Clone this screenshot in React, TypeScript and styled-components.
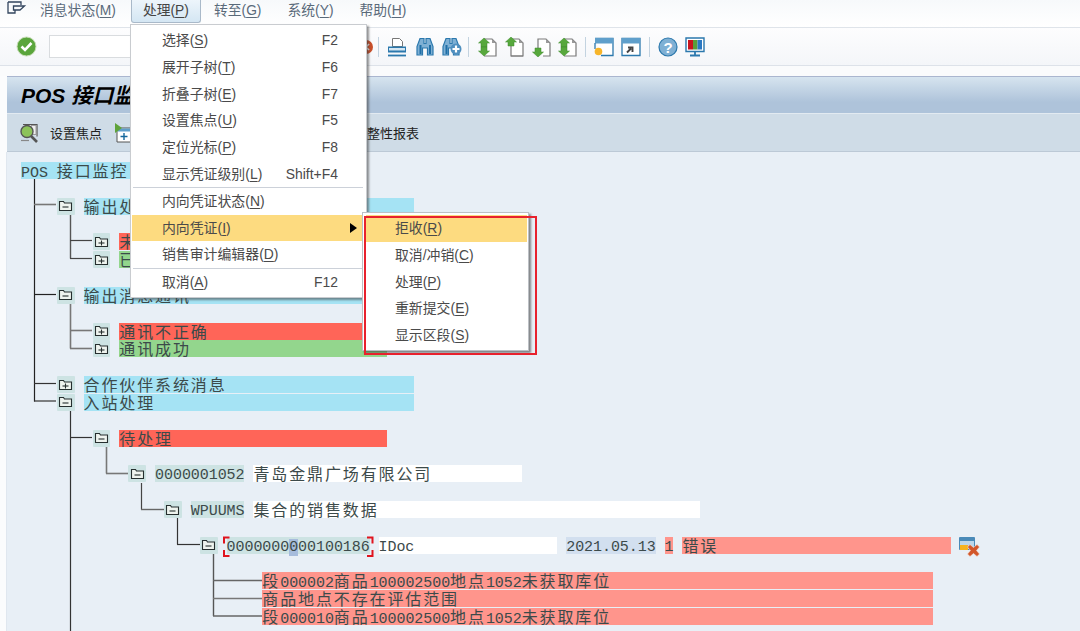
import React from "react";
import styled, { createGlobalStyle } from "styled-components";

const Global = createGlobalStyle`
  html, body { margin: 0; padding: 0; background: #fbfcfd; }
  #root { width: 1080px; height: 631px; overflow: hidden; }
`;

const UI_FONT = `"Liberation Sans", "Noto Sans CJK SC", sans-serif`;

const Root = styled.div`
  position: relative; width: 1080px; height: 631px; overflow: hidden;
  display: flex; flex-direction: column; font-family: ${UI_FONT};
`;
const MenuBar = styled.div`
  height: 28px; flex: none; box-sizing: border-box; display: flex; align-items: flex-start;
  background: linear-gradient(#f7f9fb, #ffffff); border-bottom: 1px solid #dfe4ea; padding-left: 7px;
`;
const MenuSlot = styled.div`position: relative;`;
const MenuLabel = styled.div<{ $active?: boolean }>`
  box-sizing: border-box; height: 23px; line-height: 22px; font-size: 13.8px; color: #5a6a7a;
  padding: 0 13px; margin-left: ${p => (p.$active ? "2px" : "0")};
  ${p => p.$active ? `padding: 0 11px; border: 1px solid #a9b9c9; border-top: 0; border-radius: 0 0 3px 3px; background: linear-gradient(#edf5fb, #d4e6f3); color: #444;` : ""}
  white-space: nowrap;
  u { text-underline-offset: 2px; }
`;
const Toolbar = styled.div`
  height: 38px; flex: none; box-sizing: border-box; display: flex; align-items: center; padding: 0 0 0 16px;
  background: linear-gradient(#fdfdfe, #f4f6f9); border-bottom: 1px solid #dde2e9;
`;
const OkIcon = styled.svg`width: 21px; height: 21px; flex: none;`;
const CommandField = styled.div`
  width: 240px; height: 23px; margin-left: 12px; box-sizing: border-box; background: #fff; border: 1px solid #d9dcdf; flex: none;
`;
const ToolSep = styled.div<{ $l: number; $r: number }>`
  width: 1px; height: 20px; background: #c3d3e0; flex: none; margin: 0 ${p => p.$r}px 0 ${p => p.$l}px;
`;
const ToolIcon = styled.svg<{ $gap?: number; $left?: number }>`
  width: 20px; height: 20px; flex: none; margin-right: ${p => p.$gap ?? 7}px; margin-left: ${p => p.$left ?? 0}px;
`;
const PanelGap = styled.div`height: 10px; flex: none; background: #fafbfc;`;
const Panel = styled.div`
  flex: 1; margin-left: 7px; display: flex; flex-direction: column; min-height: 0; border-top: 1px solid #aab6cf;
`;
const TitleBar = styled.div`
  height: 36px; flex: none; display: flex; align-items: center; padding-left: 14px; padding-bottom: 2px; box-sizing: border-box;
  background: linear-gradient(#d6e4ef, #aec3da 70%);
  font: italic bold 21px "Liberation Sans", "Noto Sans CJK SC", sans-serif; color: #000; white-space: pre;
`;
const AppBar = styled.div`
  height: 39px; flex: none; box-sizing: border-box; display: flex; align-items: center; padding-left: 12px;
  background: #cfdce7; border-top: 1px solid #e2eaf1; border-bottom: 1px solid #bcc9d6;
  font-size: 13px; color: #222;
`;
const AppLabel = styled.span<{ $left: number }>`margin-left: ${p => p.$left}px; white-space: nowrap;`;
const AppIcon = styled.svg<{ $left?: number }>`width: 20px; height: 20px; flex: none; margin-left: ${p => p.$left ?? 0}px;`;
const Tree = styled.div`
  flex: 1; background: #e8eff6; padding: 10px 0 0 14px; display: grid; overflow: hidden;
  grid-template-columns: repeat(116, 8.94px); grid-auto-rows: 17.85px; align-content: start;
  border-left: 1px solid #e0e7ef; margin-left: -1px;
`;
const Cell = styled.div<{ $c: number; $n: number; $r: number; $bg: string }>`
  grid-column: ${p => p.$c + 1} / span ${p => p.$n}; grid-row: ${p => p.$r + 1};
  height: 17px; line-height: 17px; background: ${p => p.$bg}; white-space: nowrap;
  font-size: 15px; color: #3c4a4a; position: relative;
`;
const Latin = styled.span`font-family: "Liberation Mono", monospace; letter-spacing: -0.06px;`;
const Cjk = styled.span`font-family: "Noto Sans CJK SC", sans-serif; font-size: 16px; letter-spacing: 1.88px; font-weight: 400;`;
const Selected = styled.span`background: #a6bcdc;`;
const Folder = styled.div<{ $c: number; $r: number }>`
  grid-column: ${p => p.$c + 1} / span 2; grid-row: ${p => p.$r + 1};
  height: 17px; background: #cde3e3; border-radius: 1px; display: flex; align-items: center; justify-content: center;
`;
const StatusIcon = styled.svg<{ $c: number; $r: number }>`
  grid-column: ${p => p.$c + 1} / span 3; grid-row: ${p => p.$r + 1}; width: 21px; height: 21px;
`;
const Overlay = styled.svg`position: absolute; left: 0; top: 0; width: 1080px; height: 631px; pointer-events: none;`;
const Dropdown = styled.div`
  position: absolute; left: 1px; top: 24px; width: 237px; box-sizing: border-box; z-index: 5; padding: 2px 1px 1px;
  background: #fff; border: 1px solid #c9ccd0; box-shadow: 2px 2px 2px rgba(60,60,60,.55);
`;
const Item = styled.div<{ $on?: boolean; $indent: number }>`
  height: 26.8px; line-height: 27px; padding: 0 27px 0 ${p => p.$indent}px; position: relative;
  display: flex; justify-content: space-between; font-size: 13.9px; color: #4a4a4a; white-space: nowrap;
  background: ${p => (p.$on ? "#fddb80" : "transparent")};
  u { text-underline-offset: 2px; }
`;
const Divider = styled.div<{ $after?: number }>`
  height: 1px; background: #ccd1d9; margin: -0.5px 2px ${p => p.$after ?? -0.5}px 1px;
`;
const Arrow = styled.i`
  position: absolute; left: 218px; top: 8px; width: 0; height: 0;
  border-left: 7px solid #000; border-top: 5px solid transparent; border-bottom: 5px solid transparent;
`;
const Submenu = styled.div`
  position: absolute; left: 231px; top: 187px; width: 167px; box-sizing: border-box; padding: 2px 1px 1.5px 3px; z-index: 6;
  background: #fff; border: 1px solid #bcc0c5; box-shadow: 2px 2px 2px rgba(60,60,60,.6);
`;
const RedFrame = styled.div`
  position: absolute; left: 364px; top: 216px; width: 173px; height: 139px; box-sizing: border-box;
  border: 2.5px solid #e8212d; z-index: 7; pointer-events: none;
`;

const splitRuns = (s: string) => s.match(/[\u3000-\u9fff]+|[^\u3000-\u9fff]+/g) ?? [];
const Txt = ({ s }: { s: string }) => (
  <>
    {splitRuns(s).map((r, i) => (/[\u3000-\u9fff]/.test(r) ? <Cjk key={i}>{r}</Cjk> : <Latin key={i}>{r}</Latin>))}
  </>
);
const Mn = ({ t, k }: { t: string; k: string }) => (
  <span>{t}(<u>{k}</u>)</span>
);

const CY = "#a5e3f4", RD = "#ff6558", GN = "#93d68d", SA = "#ff958c", WH = "#ffffff", TE = "#cde3e3", BL = "#d2dfef";

const cells: [number, number, number, string, string][] = [
  [0, 0, 18, CY, "POS 接口监控"],
  [2, 7, 37, CY, "输出处理"],
  [4, 11, 30, RD, "未"],
  [5, 11, 30, GN, "已"],
  [7, 7, 37, CY, "输出消息通讯"],
  [9, 11, 30, RD, "通讯不正确"],
  [10, 11, 30, GN, "通讯成功"],
  [12, 7, 37, CY, "合作伙伴系统消息"],
  [13, 7, 37, CY, "入站处理"],
  [15, 11, 30, RD, "待处理"],
  [17, 15, 10, TE, "0000001052"],
  [17, 26, 30, WH, "青岛金鼎广场有限公司"],
  [19, 19, 6, TE, "WPUUMS"],
  [19, 26, 50, WH, "集合的销售数据"],
  [21, 40, 20, WH, "IDoc"],
  [21, 61, 10, BL, "2021.05.13"],
  [21, 72, 1, SA, "1"],
  [21, 74, 30, SA, "错误"],
  [23, 27, 75, SA, "段000002商品100002500地点1052未获取库位"],
  [24, 27, 75, SA, "商品地点不存在评估范围"],
  [25, 27, 75, SA, "段000010商品100002500地点1052未获取库位"],
];
const folders: [number, number, boolean][] = [
  [2, 4, false], [4, 8, true], [5, 8, true], [7, 4, false], [9, 8, true], [10, 8, true],
  [12, 4, true], [13, 4, false], [15, 8, false], [17, 12, false], [19, 16, false], [21, 20, false],
];
const lines: [number, number, number, number, number, string][] = [
  [34.5, 179, 34.5, 401.5, 1.2, "#222"],
  [34, 204.5, 56, 204.5, 1.6, "#777"],
  [34, 294.5, 56, 294.5, 1.2, "#222"],
  [34, 383.5, 56, 383.5, 1.2, "#333"],
  [34, 401, 56, 401, 1.2, "#333"],
  [70.5, 215, 70.5, 258.5, 1.4, "#555"],
  [70, 240.5, 92, 240.5, 1.2, "#444"],
  [70, 258.5, 92, 258.5, 1.2, "#444"],
  [70.5, 304, 70.5, 348.5, 1.6, "#777"],
  [70, 330.5, 92, 330.5, 1.6, "#777"],
  [70, 348.5, 92, 348.5, 1.6, "#777"],
  [70.5, 411, 70.5, 631, 1.2, "#333"],
  [70, 437.5, 92, 437.5, 1.2, "#333"],
  [106.5, 447, 106.5, 473.5, 1.6, "#777"],
  [106, 473.5, 128, 473.5, 1.6, "#777"],
  [141.5, 483, 141.5, 509.5, 1.2, "#444"],
  [141, 509.5, 164, 509.5, 1.4, "#666"],
  [177.5, 518, 177.5, 544.5, 1.2, "#333"],
  [177, 544.5, 200, 544.5, 1.2, "#333"],
  [213.5, 554, 213.5, 616, 1.4, "#555"],
  [213, 580.5, 262, 580.5, 1.6, "#666"],
  [213, 598.5, 262, 598.5, 1.4, "#777"],
  [213, 616, 262, 616, 1.6, "#666"],
];

const FolderGlyph = ({ plus }: { plus: boolean }) => (
  <svg width="15" height="12" viewBox="0 0 15 12" fill="none" stroke="#262f2f" strokeWidth="1.1">
    <path d="M1.500 1.500h4l1 1.500h7v7.500h-12z" fill="#eef3ee" />
    <path d="M4.500 7h6" />
    {plus && <path d="M7.500 4.500v5" />}
  </svg>
);

/* Page with a folded corner, shown behind the green arrows. */
const DocShape = () => (
  <>
    <path d="M7 2h8l4 4v13H7" fill="#fff" stroke="#7a7a7a" strokeWidth="1.2" />
    <path d="M15 2v4h4z" fill="#9a9a9a" />
  </>
);
const UpArrow = ({ y = 1 }: { y?: number }) => <path transform={`translate(1 ${y})`} d="M6 0l5.500 5H9v4H3V5H.500z" fill="#57a83c" stroke="#3c8a2c" strokeWidth=".5" />;
const DownArrow = ({ y = 10 }: { y?: number }) => <path transform={`translate(1 ${y})`} d="M3 0h6v4h2.500L6 9 .500 4H3z" fill="#57a83c" stroke="#3c8a2c" strokeWidth=".5" />;

const Binoculars = ({ plus }: { plus?: boolean }) => (
  <>
    <path d="M4 1.500h4v5h2v-5h4l3 8v8.500h-5.500V11h-5v7H1V9.500z" fill="#7fb0d4" stroke="#2b78ad" strokeWidth="1.2" />
    <path d="M4.500 8v9M14 8v9" stroke="#1f6ea6" strokeWidth="2" />
    {plus && <><circle cx="14" cy="12" r="5.500" fill="#4f8fbf" /><path d="M10.500 12h7M14 8.500v7" stroke="#fff" strokeWidth="2.200" /></>}
  </>
);

export default function App() {
  return (
    <Root>
      <Global />
      <MenuBar>
        <svg width="20" height="14" viewBox="0 0 20 14" fill="none" stroke="#33465f" strokeWidth="1.3" style={{ flex: "none", marginTop: 1 }}>
          <path d="M1 1h13v3M1 1v11h7V9" />
          <path d="M6.500 5h11l-4.500 4H6.500z" />
        </svg>
        <MenuLabel><Mn t="消息状态" k="M" /></MenuLabel>
        <MenuSlot>
          <MenuLabel $active><Mn t="处理" k="P" /></MenuLabel>
          <Dropdown>
            {[
              ["选择", "S", "F2"], ["展开子树", "T", "F6"], ["折叠子树", "E", "F7"], ["设置焦点", "U", "F5"],
              ["定位光标", "P", "F8"], ["显示凭证级别", "L", "Shift+F4"],
            ].map(([t, k, f]) => (
              <Item key={t} $indent={30}><Mn t={t} k={k} /><span>{f}</span></Item>
            ))}
            <Divider />
            <Item $indent={30}><Mn t="内向凭证状态" k="N" /></Item>
            <Item $indent={30} $on><Mn t="内向凭证" k="I" /><Arrow /></Item>
            <Item $indent={30}><Mn t="销售审计编辑器" k="D" /></Item>
            <Divider $after={0.5} />
            <Item $indent={30}><Mn t="取消" k="A" /><span>F12</span></Item>
            <Submenu>
              {[["拒收", "R"], ["取消/冲销", "C"], ["处理", "P"], ["重新提交", "E"], ["显示区段", "S"]].map(([t, k], i) => (
                <Item key={t + k} $indent={29} $on={i === 0}><Mn t={t} k={k} /></Item>
              ))}
            </Submenu>
          </Dropdown>
        </MenuSlot>
        <MenuLabel><Mn t="转至" k="G" /></MenuLabel>
        <MenuLabel><Mn t="系统" k="Y" /></MenuLabel>
        <MenuLabel><Mn t="帮助" k="H" /></MenuLabel>
      </MenuBar>
      <Toolbar>
        <OkIcon viewBox="0 0 21 21">
          <circle cx="10.500" cy="10.500" r="9.500" fill="#5aa53c" stroke="#c8ddb8" strokeWidth="1" />
          <path d="M5.500 10.500l3.500 3.500 6.500-7" fill="none" stroke="#fff" strokeWidth="2.600" />
        </OkIcon>
        <CommandField />
        <ToolIcon viewBox="0 0 20 20" $gap={2} $left={67}>
          <circle cx="10" cy="10" r="7" fill="#c9502b" />
          <path d="M7 7l6 6M13 7l-6 6" stroke="#fff" strokeWidth="1.600" />
        </ToolIcon>
        <ToolSep $l={0} $r={8} />
        <ToolIcon viewBox="0 0 20 20" $gap={9}>
          <path d="M5.500 1.500h7l3 3v5h-10z" fill="#fff" stroke="#777" />
          <path d="M1 9.500h18v6H1z" fill="#2b78ad" />
          <path d="M2 11h16v2.500H2z" fill="#d5e6f2" />
          <path d="M1 18.500h18" stroke="#2b78ad" strokeWidth="1.800" />
        </ToolIcon>
        <ToolIcon viewBox="0 0 20 20" $gap={6}><Binoculars /></ToolIcon>
        <ToolIcon viewBox="0 0 20 20" $gap={6}><Binoculars plus /></ToolIcon>
        <ToolSep $l={0} $r={8} />
        <ToolIcon viewBox="0 0 20 20"><DocShape /><UpArrow y={1} /><DownArrow y={10} /></ToolIcon>
        <ToolIcon viewBox="0 0 20 20"><DocShape /><path d="M7 9v10h12" fill="none" stroke="#7a7a7a" strokeWidth="1.200" /><UpArrow y={0} /></ToolIcon>
        <ToolIcon viewBox="0 0 20 20" $gap={6}><path d="M7 11V2h8l4 4v13h-7" fill="#fff" stroke="#7a7a7a" strokeWidth="1.200" /><path d="M15 2v4h4z" fill="#9a9a9a" /><DownArrow y={11} /></ToolIcon>
        <ToolIcon viewBox="0 0 20 20" $gap={8}><DocShape /><UpArrow y={1} /><DownArrow y={10} /></ToolIcon>
        <ToolSep $l={0} $r={8} />
        <ToolIcon viewBox="0 0 20 20">
          <path d="M1 1.500h18v17H7" fill="#fff" stroke="#2b78ad" strokeWidth="1.300" />
          <path d="M1 1h18v5.500H1z" fill="#5f9fcb" />
          <path d="M1 6v6" stroke="#2b78ad" strokeWidth="1.300" />
          <circle cx="4.500" cy="14.500" r="3.800" fill="#f7b52a" />
        </ToolIcon>
        <ToolIcon viewBox="0 0 20 20" $gap={8}>
          <path d="M1 1.500h18v17H1z" fill="#fff" stroke="#2b78ad" strokeWidth="1.300" />
          <path d="M1 1h18v5.500H1z" fill="#5f9fcb" />
          <path d="M6 15.500l4-4M7 10.500h4.500V15" fill="none" stroke="#444" strokeWidth="1.900" />
        </ToolIcon>
        <ToolSep $l={0} $r={8} />
        <ToolIcon viewBox="0 0 20 20">
          <circle cx="10" cy="10" r="9" fill="#7fb0d4" stroke="#2b78ad" strokeWidth="1.200" />
          <text x="10" y="15.500" textAnchor="middle" fontSize="15" fontWeight="700" fill="#fff" fontFamily="Liberation Sans">?</text>
        </ToolIcon>
        <ToolIcon viewBox="0 0 20 20">
          <path d="M1 1h18v13.500H1z" fill="#fff" stroke="#2b78ad" strokeWidth="1.400" />
          <path d="M3 3h5v9.500H3z" fill="#c8141e" /><path d="M8 3h4.500v9.500H8z" fill="#5a9e3a" /><path d="M12.500 3H17v9.500h-4.500z" fill="#2a78c2" />
          <path d="M10 15v3M5 18.500h10" stroke="#2b78ad" strokeWidth="1.800" />
        </ToolIcon>
      </Toolbar>
      <PanelGap />
      <Panel>
        <TitleBar>POS 接口监控</TitleBar>
        <AppBar>
          <AppIcon viewBox="0 0 20 20">
            <path d="M4 1.500h14v12" fill="#fff" stroke="#555" strokeWidth="1.200" />
            <path d="M12 2.500h5v9h-5z" fill="#eee" stroke="#888" strokeWidth=".8" />
            <path d="M2 17.500h8" stroke="#888" strokeWidth="1.200" />
            <circle cx="8" cy="8.500" r="6" fill="#8cc35a" stroke="#555" strokeWidth="1.400" />
            <path d="M12 13l6 6" stroke="#555" strokeWidth="2.600" />
          </AppIcon>
          <AppLabel $left={11}>设置焦点</AppLabel>
          <AppIcon viewBox="0 0 20 20" $left={12}>
            <path d="M3 5h14v14H3z" fill="#fff" stroke="#555" />
            <path d="M3.500 5.500h13v3h-13z" fill="#5f9fcb" />
            <path d="M1 0l7 5-7 5z" fill="#5fa33a" />
            <path d="M6.500 13.500h7M10 10v7" stroke="#14679c" strokeWidth="1.400" />
          </AppIcon>
          <AppLabel $left={233}>整性报表</AppLabel>
        </AppBar>
        <Tree>
          {cells.map(([r, c, n, bg, s]) => (
            <Cell key={`${r}-${c}`} $r={r} $c={c} $n={n} $bg={bg}><Txt s={s} /></Cell>
          ))}
          {folders.map(([r, c, plus]) => (
            <Folder key={`${r}-${c}`} $r={r} $c={c}><FolderGlyph plus={plus} /></Folder>
          ))}
          <Cell $r={21} $c={23} $n={16} $bg={TE}>
            <Latin>0000000<Selected>0</Selected>00100186</Latin>
          </Cell>
          <StatusIcon $r={21} $c={105} viewBox="0 0 21 21">
            <path d="M0.500 0.500h15v12h-15z" fill="#bcd6ea" stroke="#4a8ab8" />
            <path d="M1 1h14v3H1z" fill="#4a8ab8" />
            <path d="M1 8h8v5H1z" fill="#f5b31e" />
            <path d="M8.500 10l2.500-2.500 3.500 3 3.500-3 2.500 2.500-3 3.500 3 3.500-2.500 2.500-3.500-3-3.500 3-2.500-2.500 3-3.500z" fill="#d2562a" stroke="#f4e0d6" strokeWidth=".6" />
          </StatusIcon>
        </Tree>
      </Panel>
      <Overlay viewBox="0 0 1080 631">
        {lines.map(([x1, y1, x2, y2, w, c], i) => (
          <line key={i} x1={x1} y1={y1} x2={x2} y2={y2} strokeWidth={w} stroke={c} />
        ))}
        <path d="M229.500 537.500h-5.500v6M367 537.500h5.500v6M224 550v6h5.500M372.500 550v6H367" fill="none" stroke="#e0141e" strokeWidth="2" />
      </Overlay>
      <RedFrame />
    </Root>
  );
}
